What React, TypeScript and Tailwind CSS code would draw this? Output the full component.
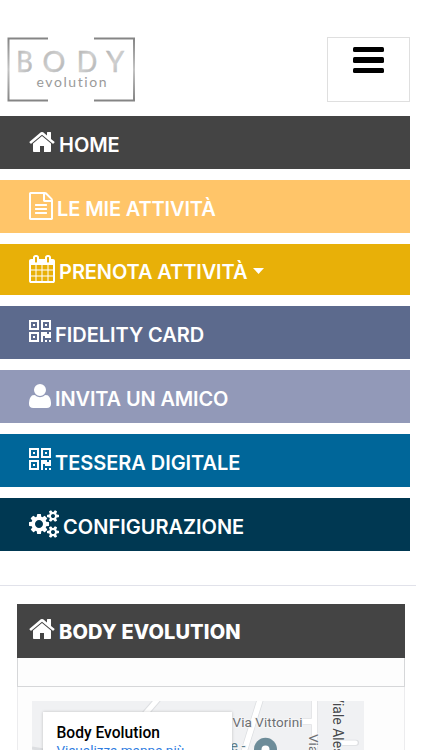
import { ReactNode } from 'react';
import clsx from 'clsx';

const HOME =
  'M1472 992v480q0 26-19 45t-45 19h-384v-384h-256v384h-384q-26 0-45-19t-19-45v-480q0-1 .5-3t.5-3l575-474 575 474q1 2 1 6zm223-69l-62 74q-8 9-21 11h-3q-13 0-21-7l-692-577-692 577q-12 8-24 7-13-2-21-11l-62-74q-8-10-7-23.5t11-21.5l719-599q32-26 76-26t76 26l244 204v-195q0-14 9-23t23-9h192q14 0 23 9t9 23v408l219 182q10 8 11 21.5t-7 23.5z';
const FILE_TEXT =
  'M1596 380q28 28 48 76t20 88v1152q0 40-28 68t-68 28h-1344q-40 0-68-28t-28-68v-1600q0-40 28-68t68-28h896q40 0 88 20t76 48zm-444-244v376h376q-10-29-22-41l-313-313q-12-12-41-22zm384 1528v-1024h-416q-40 0-68-28t-28-68v-416h-768v1536h1280zm-1024-864q0-14 9-23t23-9h704q14 0 23 9t9 23v64q0 14-9 23t-23 9h-704q-14 0-23-9t-9-23v-64zm736 224q14 0 23 9t9 23v64q0 14-9 23t-23 9h-704q-14 0-23-9t-9-23v-64q0-14 9-23t23-9h704zm0 256q14 0 23 9t9 23v64q0 14-9 23t-23 9h-704q-14 0-23-9t-9-23v-64q0-14 9-23t23-9h704z';
const CALENDAR =
  'M192 1664h288v-288h-288v288zm352 0h320v-288h-320v288zm-352-352h288v-320h-288v320zm352 0h320v-320h-320v320zm-352-384h288v-288h-288v288zm736 736h320v-288h-320v288zm-384-736h320v-288h-320v288zm768 736h288v-288h-288v288zm-384-352h320v-320h-320v320zm-352-864v-288q0-13-9.5-22.5t-22.5-9.5h-64q-13 0-22.5 9.5t-9.5 22.5v288q0 13 9.5 22.5t22.5 9.5h64q13 0 22.5-9.5t9.5-22.5zm736 864h288v-320h-288v320zm-384-384h320v-288h-320v288zm384 0h288v-288h-288v288zm32-480v-288q0-13-9.5-22.5t-22.5-9.5h-64q-13 0-22.5 9.5t-9.5 22.5v288q0 13 9.5 22.5t22.5 9.5h64q13 0 22.5-9.5t9.5-22.5zm384-64v1280q0 52-38 90t-90 38h-1408q-52 0-90-38t-38-90v-1280q0-52 38-90t90-38h128v-96q0-66 47-113t113-47h64q66 0 113 47t47 113v96h384v-96q0-66 47-113t113-47h64q66 0 113 47t47 113v96h128q52 0 90 38t38 90z';
const QRCODE =
  'M0 128h640v640h-640zM128 256v384h384v-384zM256 384h128v128h-128zM768 128h640v640h-640zM896 256v384h384v-384zM1024 384h128v128h-128zM0 896h640v640h-640zM128 1024v384h384v-384zM256 1152h128v128h-128zM768 896h384v128h128v-128h128v384h-384v-128h-128v384h-128zM1024 1408h128v128h-128zM1280 1408h128v128h-128z';
const USER =
  'M1600 1405q0 120-73 189.5t-194 69.5h-874q-121 0-194-69.5t-73-189.5q0-53 3.5-103.5t14-109 26.5-108.5 43-97.5 62-81 85.5-53.5 111.5-20q9 0 42 21.5t74.5 48 108 48 133.5 21.5 133.5-21.5 108-48 74.5-48 42-21.5q61 0 111.5 20t85.5 53.5 62 81 43 97.5 26.5 108.5 14 109 3.5 103.5zm-320-893q0 159-112.5 271.5t-271.5 112.5-271.5-112.5-112.5-271.5 112.5-271.5 271.5-112.5 271.5 112.5 112.5 271.5z';
const COGS =
  'M896 896q0-106-75-181t-181-75-181 75-75 181 75 181 181 75 181-75 75-181zm768 512q0-52-38-90t-90-38-90 38-38 90q0 53 37.5 90.5t90.5 37.5 90.5-37.5 37.5-90.5zm0-1024q0-52-38-90t-90-38-90 38-38 90q0 53 37.5 90.5t90.5 37.5 90.5-37.5 37.5-90.5zm-384 421v185q0 10-7 19.5t-16 10.5l-155 24q-11 35-32 76 34 48 90 115 7 11 7 20 0 12-7 19-23 30-82.5 89.5t-78.5 59.5q-11 0-21-7l-115-90q-37 19-77 31-11 108-23 155-7 24-30 24h-186q-11 0-20-7.5t-10-17.5l-23-153q-34-10-75-31l-118 89q-7 7-20 7-11 0-21-8-144-133-144-160 0-9 7-19 10-14 41-53t47-61q-23-44-35-82l-152-24q-10-1-17-9.5t-7-19.5v-185q0-10 7-19.5t16-10.5l155-24q11-35 32-76-34-48-90-115-7-11-7-20 0-12 7-20 22-30 82-89t79-59q11 0 21 7l115 90q34-18 77-32 11-108 23-154 7-24 30-24h186q11 0 20 7.5t10 17.5l23 153q34 10 75 31l118-89q8-7 20-7 11 0 21 8 144 133 144 160 0 8-7 19-12 16-42 54t-45 60q23 48 34 82l152 23q10 2 17 10.5t7 19.5zm640 533v140q0 16-149 31-12 27-30 52 51 113 51 138 0 4-4 7-122 71-124 71-8 0-46-47t-52-68q-20 2-30 2t-30-2q-14 21-52 68t-46 47q-2 0-124-71-4-3-4-7 0-25 51-138-18-25-30-52-149-15-149-31v-140q0-16 149-31 13-29 30-52-51-113-51-138 0-4 4-7 4-2 35-20t59-34 30-16q8 0 46 46.5t52 67.5q20-2 30-2t30 2q51-71 92-112l6-2q4 0 124 70 4 3 4 7 0 25-51 138 17 23 30 52 149 15 149 31zm0-1024v140q0 16-149 31-12 27-30 52 51 113 51 138 0 4-4 7-122 71-124 71-8 0-46-47t-52-68q-20 2-30 2t-30-2q-14 21-52 68t-46 47q-2 0-124-71-4-3-4-7 0-25 51-138-18-25-30-52-149-15-149-31v-140q0-16 149-31 13-29 30-52-51-113-51-138 0-4 4-7 4-2 35-20t59-34 30-16q8 0 46 46.5t52 67.5q20-2 30-2t30 2q51-71 92-112l6-2q4 0 124 70 4 3 4 7 0 25-51 138 17 23 30 52 149 15 149 31z';

// x = left edge of the glyph, w = its advance, in 1792-unit font space
type Glyph = { d: string; x: number; w: number };

const glyphs: Record<string, Glyph> = {
  home: { d: HOME, x: 64, w: 1664 },
  file: { d: FILE_TEXT, x: 128, w: 1536 },
  calendar: { d: CALENDAR, x: 64, w: 1664 },
  qrcode: { d: QRCODE, x: 0, w: 1408 },
  user: { d: USER, x: 192, w: 1408 },
  cogs: { d: COGS, x: 0, w: 1920 },
};

function Icon({ name }: { name: string }) {
  const g = glyphs[name];
  return (
    <svg
      className="h-7 shrink-0"
      width={g.w / 64}
      viewBox={`${g.x} 0 ${g.w} 1792`}
      fill="currentColor"
      fillRule={name === 'qrcode' ? 'evenodd' : 'nonzero'}
    >
      <path d={g.d} />
    </svg>
  );
}

const items = [
  { icon: 'home', label: 'HOME', row: 'h-[53px] pt-3 bg-[#444444]', text: 'tracking-[-0.1px]' },
  { icon: 'file', label: 'LE MIE ATTIVITÀ', row: 'h-[53px] pt-3 bg-[#ffc569]', text: 'tracking-[-0.13px]' },
  { icon: 'calendar', label: 'PRENOTA ATTIVITÀ', row: 'h-[51px] pt-[11px] bg-[#e8b008]', text: 'tracking-[-0.1px]', caret: true },
  { icon: 'qrcode', label: 'FIDELITY CARD', row: 'h-[53px] pt-3 bg-[#5c6a8d]', text: 'tracking-[-0.05px]' },
  { icon: 'user', label: 'INVITA UN AMICO', row: 'h-[53px] pt-3 bg-[#9299b8]', text: 'tracking-[-0.15px]' },
  { icon: 'qrcode', label: 'TESSERA DIGITALE', row: 'h-[53px] pt-3 bg-[#006699]', text: 'tracking-[-0.05px]' },
  { icon: 'cogs', label: 'CONFIGURAZIONE', row: 'h-[53px] pt-3 bg-[#003852]', text: '' },
];

export default function App() {
  return (
    <div className="h-[750px] w-[422px] overflow-hidden bg-white font-['Inter',sans-serif]">
      <header className="flex h-[116px] items-start justify-between pt-[37px] pr-3 pl-[7px]">
        <Logo />
        <button className="flex h-[65px] w-[83px] flex-col items-center gap-[5px] border border-[#dfdfdf] pt-[9px]">
          <span className="h-[5.3px] w-[31px] rounded-[1.5px] bg-black" />
          <span className="h-[5.3px] w-[31px] rounded-[1.5px] bg-black" />
          <span className="h-[5.3px] w-[31px] rounded-[1.5px] bg-black" />
        </button>
      </header>

      <nav className="flex w-[410px] flex-col gap-[11px]">
        {items.map((item) => (
          <a key={item.label} className={clsx('flex items-start pl-[28.5px] text-white', item.row)}>
            <Icon name={item.icon} />
            <Label className={clsx('ml-[4.6px] font-semibold', item.text)}>{item.label}</Label>
            {item.caret && (
              <svg className="mt-[13px] ml-[5.5px] h-[6px] w-[11px]" viewBox="0 0 11 6" fill="currentColor">
                <path d="M0 0h11L5.500 6z" />
              </svg>
            )}
          </a>
        ))}
      </nav>

      <div className="mt-[34px] h-px w-[416px] bg-[#e1e2ea]" />

      <section className="mt-[18px] ml-[17px] w-[388px]">
        <div className="flex h-[54px] items-start bg-[#444444] pt-[11px] pl-[11.5px] text-white">
          <Icon name="home" />
          <Label className="ml-[4.6px] font-extrabold tracking-[0.13px]">BODY EVOLUTION</Label>
        </div>
        <div className="h-[29px] border border-t-0 border-[#d6d7d9] bg-[#fdfdfd]" />
        <div className="h-[63px] border-x border-[#ececee] bg-[#fdfdfd] pt-[14px] pl-[14px]">
          <MapPreview />
        </div>
      </section>
    </div>
  );
}

function Label({ className, children }: { className?: string; children: ReactNode }) {
  return <span className={clsx('mt-[5px] text-[20px] leading-6 whitespace-nowrap', className)}>{children}</span>;
}

function Logo() {
  return (
    <svg className="h-[65px] w-32" viewBox="0 0 128 65">
      <defs>
        <linearGradient id="metal" x1="0" y1="0" x2="0" y2="1">
          <stop offset="0" stopColor="#858585" />
          <stop offset="0.5" stopColor="#c4c4c4" />
          <stop offset="1" stopColor="#858585" />
        </linearGradient>
        <linearGradient id="letters" x1="0" y1="0" x2="1" y2="1">
          <stop offset="0" stopColor="#adadad" />
          <stop offset="0.5" stopColor="#d0d0d0" />
          <stop offset="1" stopColor="#a9a9a9" />
        </linearGradient>
      </defs>
      <path d="M41 1.500H1.500V63.500H41M87 1.500H127V63.500H87" fill="none" stroke="url(#metal)" strokeWidth="2" />
      <g fill="url(#letters)" stroke="url(#letters)" strokeWidth="0.5" fontFamily="Lato" fontSize="28.500">
        <text x="9.300" y="34.700" textLength="16.500" lengthAdjust="spacingAndGlyphs">B</text>
        <text x="35.500" y="34.700">O</text>
        <text x="69.800" y="34.700" textLength="20.500" lengthAdjust="spacingAndGlyphs">D</text>
        <text x="99.300" y="34.700">Y</text>
      </g>
      <text
        className="[font-variant-ligatures:none]"
        x="29.500"
        y="50.300"
        fill="#9a9a9a"
        fontFamily="Lato"
        fontSize="14"
        textLength="70"
      >
        evolution
      </text>
    </svg>
  );
}

function MapPreview() {
  return (
    <div className="relative h-[49px] w-[332px] overflow-hidden bg-[#f0f1f3]">
      <svg className="absolute inset-0 h-full w-full" viewBox="0 0 332 49">
        <g fill="none" stroke="#dcdee1">
          <path d="M126 -2L100 28" strokeWidth="7" />
          <path d="M229 -4L211 54" strokeWidth="7" />
          <path d="M282.500 -2V54M268 20.500H282" strokeWidth="7" />
          <path d="M308 41.800H324" strokeWidth="6" strokeLinecap="round" />
          <path d="M0 47L12 49" strokeWidth="3" />
        </g>
        <g fill="none" stroke="#fff">
          <path d="M126 -2L100 28" strokeWidth="5" />
          <path d="M229 -4L211 54" strokeWidth="5.500" />
          <path d="M282.500 -2V54M268 20.500H284" strokeWidth="5.500" />
          <path d="M308 41.800H323.500" strokeWidth="4.500" strokeLinecap="round" />
        </g>
        <g fontFamily="Roboto" fill="#6d6f73" stroke="#f5f6f7" strokeWidth="2" paintOrder="stroke">
          <text x="200.500" y="26.300" fontSize="13.500" textLength="70">Via Vittorini</text>
          <text x="198.500" y="50" fontSize="14" fill="#5f7f8c">e -</text>
          <text transform="translate(277 33) rotate(90)" fontSize="13.500">Via</text>
          <text transform="translate(301 -7) rotate(90)" fontSize="14" fill="#46484c">Viale Alessandria</text>
        </g>
        <circle cx="233.500" cy="48.300" r="11.500" fill="#6d8c99" />
        <circle cx="233.500" cy="48.500" r="4" fill="#fff" />
      </svg>
      <div className="absolute top-[11px] left-[11px] h-14 w-[189px] bg-white pt-[12px] pl-[13.5px] font-['Roboto',sans-serif] shadow-[0_0_3px_rgba(0,0,0,0.2)]">
        <div className="text-[15.6px] leading-[18px] font-medium whitespace-nowrap text-black">Body Evolution</div>
        <div className="text-[13.5px] leading-4 whitespace-nowrap text-[#2f7de1]">Visualizza mappa più</div>
      </div>
    </div>
  );
}
